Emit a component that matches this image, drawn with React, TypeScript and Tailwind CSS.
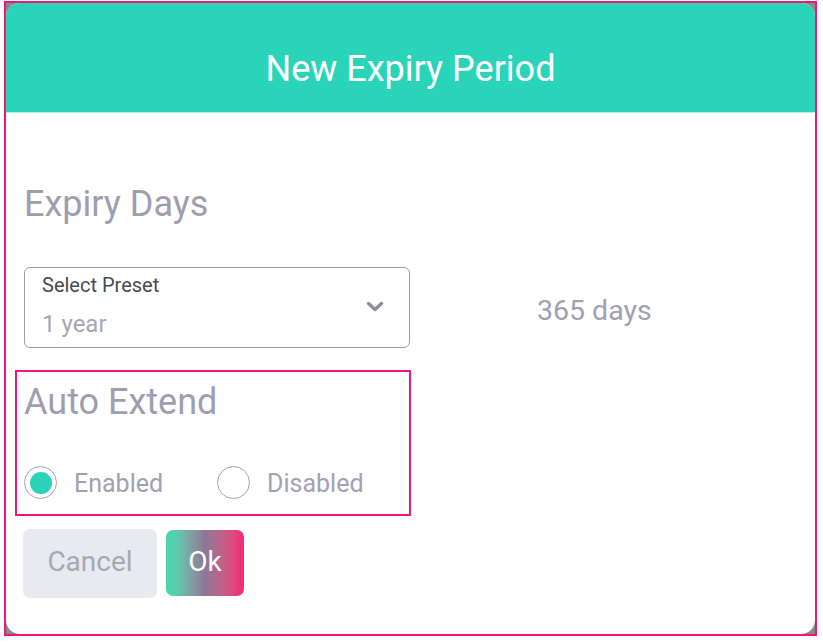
import { useState } from "react";

const Radio = ({ label, checked, onClick }: { label: string; checked: boolean; onClick: () => void }) => {
  return (
    <div className="flex items-center gap-[17px] cursor-pointer" onClick={onClick}>
      <div className="w-[33px] h-[33px] rounded-full border-[1.5px] border-[#a3a3ab] flex items-center justify-center bg-white">
        {checked && <div className="w-[22px] h-[22px] rounded-full bg-[#29d3b8]" />}
      </div>
      <span className="text-[25px] leading-[30px] text-[#a1a1b3] mt-[2px]">{label}</span>
    </div>
  );
};

export default function App() {
  const [extend, setExtend] = useState(true);
  return (
    <div className="w-[823px] h-[642px] bg-white pt-px pl-1" style={{ fontFamily: "Roboto, 'Noto Sans', sans-serif" }}>
      <div className="w-[813px] h-[635px] border-2 border-[#f2167c] bg-[#8a8a8a]">
        <div className="h-full rounded-[14px] bg-white overflow-hidden flex flex-col">
          <div className="h-[110px] shrink-0 bg-[#29d4b9] border-b border-[#b3efe3] flex justify-center pt-[44px]">
            <h1 className="text-[36px] leading-[44px] text-white">New Expiry Period</h1>
          </div>
          <div className="flex flex-col pl-[18px]">
            <h2 className="mt-[71px] text-[36px] leading-[40px] text-[#9e9eb0]">Expiry Days</h2>
            <div className="flex items-start mt-[43px]">
              <div className="w-[386px] h-[81px] border border-[#9c9ca6] rounded-[6px] flex items-center pl-[17px] pr-[25px]">
                <div className="flex flex-col flex-1 self-start pt-[5px]">
                  <span className="text-[20px] leading-[24px] text-[#4a4a4f]">Select Preset</span>
                  <span className="mt-[13px] text-[24px] leading-[28px] text-[#a6a6b6]">1 year</span>
                </div>
                <svg width="18" height="12" viewBox="0 0 18 12" className="mb-[1px]">
                  <polyline points="2.5,2.5 9,8.5 15.5,2.5" fill="none" stroke="#8c8c9a" strokeWidth="3.4" strokeLinecap="round" strokeLinejoin="round" />
                </svg>
              </div>
              <span className="ml-[127px] mt-[28px] text-[28.5px] leading-[32px] text-[#a0a0b2]">365 days</span>
            </div>
            <div className="mt-[22px] -ml-[9px] w-[396px] border-2 border-[#f2167c] pl-[7px] pt-[10px] pb-[15px]">
              <h2 className="text-[36px] leading-[40px] text-[#9e9eb0]">Auto Extend</h2>
              <div className="flex items-center gap-[54px] mt-[44px]">
                <Radio label="Enabled" checked={extend} onClick={() => setExtend(true)} />
                <Radio label="Disabled" checked={!extend} onClick={() => setExtend(false)} />
              </div>
            </div>
            <div className="flex items-start gap-[9px] mt-[13px] -ml-px">
              <button className="w-[134px] h-[69px] rounded-[7px] bg-[#e9e9f0] text-[28px] text-[#a7a7b5] pb-[4px]">Cancel</button>
              <button className="mt-px w-[78px] h-[66px] rounded-[7px] bg-linear-to-r from-[#4fd3ad] from-10% via-[#8d7699] to-[#ef2f76] to-95% text-[28px] text-white pb-[3px]">
                Ok
              </button>
            </div>
          </div>
        </div>
      </div>
    </div>
  );
}
